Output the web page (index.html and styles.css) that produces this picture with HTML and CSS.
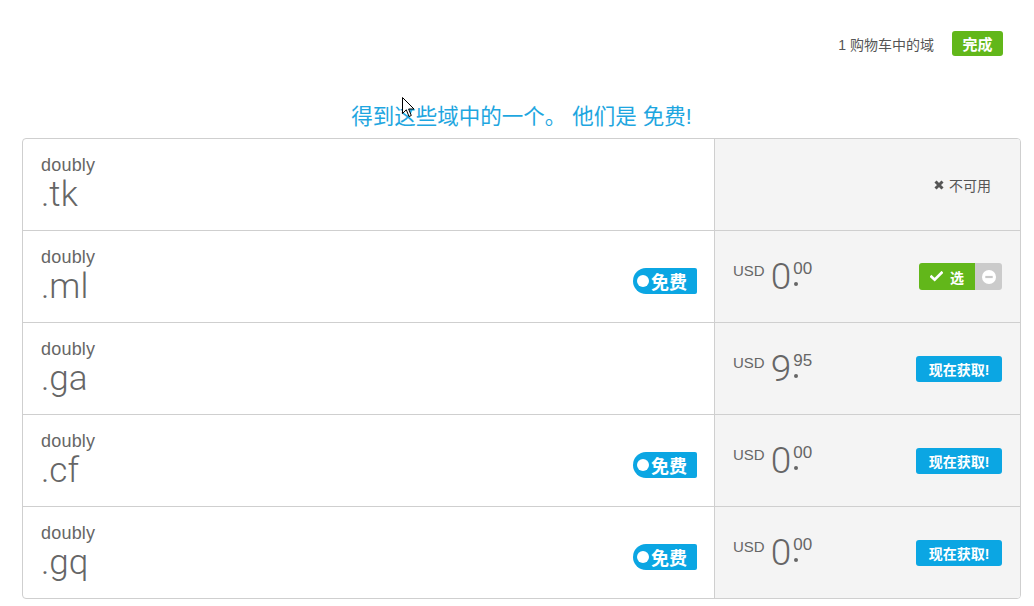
FILE: index.html
```html
<!DOCTYPE html>
<html lang="zh">
<head>
<meta charset="utf-8">
<title>域</title>
<link rel="stylesheet" href="styles.css">
</head>
<body>
<div class="topbar">
  <span class="cart-count">1 购物车中的域</span>
  <button class="btn btn-done">完成</button>
</div>
<div class="wrap">
  <h2 class="heading">得到这些域中的一个。 他们是 免费!</h2>
  <div class="table">
    <div class="row">
      <div class="cell-left">
        <div class="domain"><div class="name">doubly</div><div class="tld">.tk</div></div>
      </div>
      <div class="cell-right">
        <span></span>
        <span class="unavail"><svg class="x" viewBox="0 0 10 10" width="10" height="10"><path d="M1.5 1.5 L8.5 8.5 M8.5 1.5 L1.5 8.5" stroke="#555" stroke-width="3" stroke-linecap="butt"/></svg>不可用</span>
      </div>
    </div>
    <div class="row">
      <div class="cell-left">
        <div class="domain"><div class="name">doubly</div><div class="tld">.ml</div></div>
        <span class="free"><span class="dot-w"></span>免费</span>
      </div>
      <div class="cell-right">
        <div class="price"><span class="cur">USD</span><span class="int">0</span><span class="cents">00</span></div>
        <div class="select-group">
          <button class="btn btn-select"><svg class="check" viewBox="0 0 14 12" width="13" height="11"><path d="M1.5 6.2 L5 9.5 L12.5 2" fill="none" stroke="#fff" stroke-width="3" stroke-linecap="square"/></svg>选</button>
          <button class="btn btn-remove"><svg viewBox="0 0 14 14" width="14" height="14"><circle cx="7" cy="7" r="7" fill="#fff"/><rect x="3.3" y="5.9" width="7.4" height="2.2" fill="#c8c8c8"/></svg></button>
        </div>
      </div>
    </div>
    <div class="row">
      <div class="cell-left">
        <div class="domain"><div class="name">doubly</div><div class="tld">.ga</div></div>
      </div>
      <div class="cell-right">
        <div class="price"><span class="cur">USD</span><span class="int">9</span><span class="cents">95</span></div>
        <button class="btn btn-get">现在获取!</button>
      </div>
    </div>
    <div class="row">
      <div class="cell-left">
        <div class="domain"><div class="name">doubly</div><div class="tld">.cf</div></div>
        <span class="free"><span class="dot-w"></span>免费</span>
      </div>
      <div class="cell-right">
        <div class="price"><span class="cur">USD</span><span class="int">0</span><span class="cents">00</span></div>
        <button class="btn btn-get">现在获取!</button>
      </div>
    </div>
    <div class="row">
      <div class="cell-left">
        <div class="domain"><div class="name">doubly</div><div class="tld">.gq</div></div>
        <span class="free"><span class="dot-w"></span>免费</span>
      </div>
      <div class="cell-right">
        <div class="price"><span class="cur">USD</span><span class="int">0</span><span class="cents">00</span></div>
        <button class="btn btn-get">现在获取!</button>
      </div>
    </div>
  </div>
</div>
<svg class="cursor" width="13" height="21" viewBox="0 0 13 21"><path d="M0.5 0.5 L0.5 16.5 L4.3 12.8 L7 19.5 L9.3 18.5 L6.6 12 L12 12 Z" fill="#fff" stroke="#000" stroke-width="1" stroke-linejoin="miter"/></svg>
</body>
</html>
```
FILE: styles.css
```css
* { box-sizing: border-box; }
body {
  margin: 0;
  font-family: "Liberation Sans", "Noto Sans CJK SC", sans-serif;
  color: #666;
  background: #fff;
  position: relative;
  width: 1034px;
  height: 606px;
  overflow: hidden;
}
.topbar {
  display: flex;
  justify-content: flex-end;
  align-items: center;
  gap: 18px;
  padding: 31px 31px 0 0;
}
.cart-count {
  font-size: 14px;
  color: #555;
}
.btn {
  border: 0;
  margin: 0;
  font-family: "Liberation Sans", "Noto Sans CJK SC", sans-serif;
  font-weight: bold;
  color: #fff;
  cursor: pointer;
  display: inline-flex;
  align-items: center;
  justify-content: center;
  padding: 0;
}
.btn-done {
  background: #62b71a;
  width: 51px;
  height: 25px;
  border-radius: 3px;
  font-size: 15px;
}
.wrap {
  margin: 0 13px 0 22px;
}
.heading {
  margin: 46px 0 6px;
  font-size: 21.5px;
  line-height: 30px;
  font-weight: normal;
  text-align: center;
  color: #1ea6e0;
}
.table {
  border: 1px solid #cfcfcf;
  border-radius: 4px;
  overflow: hidden;
}
.row {
  display: grid;
  grid-template-columns: 692px 1fr;
  height: 92px;
  border-top: 1px solid #cfcfcf;
}
.row:first-child {
  border-top: 0;
  height: 91px;
}
.cell-left {
  border-right: 1px solid #cfcfcf;
  display: flex;
  align-items: center;
  justify-content: space-between;
  padding: 0 17px 0 18px;
}
.cell-right {
  background: #f4f4f4;
  display: flex;
  align-items: center;
  justify-content: space-between;
  padding: 0 18px 0 18px;
}
.domain {
  margin-top: 0;
}
.name {
  font-size: 18px;
  line-height: 20px;
  letter-spacing: 0.2px;
  color: #666;
}
.tld {
  font-family: Roboto, "Liberation Sans", sans-serif;
  font-size: 35px;
  line-height: 40px;
  color: #666;
  font-weight: 300;
}
.free {
  display: inline-flex;
  align-items: center;
  background: #0ba6e3;
  color: #fff;
  font-weight: bold;
  font-size: 18px;
  height: 26px;
  width: 64px;
  padding: 0 0 0 4px;
  border-radius: 13px 2px 2px 13px;
  margin-top: 8px;
}
.dot-w {
  width: 12px;
  height: 12px;
  border-radius: 50%;
  background: #fff;
  margin-right: 2px;
}
.unavail {
  font-size: 14px;
  color: #555;
  margin-right: 11px;
  display: inline-flex;
  align-items: center;
}
.x {
  margin-right: 5px;
}
.price {
  display: flex;
  align-items: flex-start;
  color: #666;
  line-height: 1;
}
.cur {
  font-size: 15px;
  margin-top: 4px;
  margin-right: 6px;
}
.int {
  font-family: Roboto, "Liberation Sans", sans-serif;
  font-size: 37px;
  font-weight: 300;
  margin-top: -1px;
}
.cents {
  font-size: 17px;
  margin-top: 1px;
  margin-left: 2px;
  position: relative;
}
.cents::before {
  content: "";
  position: absolute;
  left: 1px;
  top: 22px;
  width: 4px;
  height: 4px;
  border-radius: 50%;
  background: #666;
}
.select-group {
  display: flex;
  height: 27px;
}
.btn-select {
  background: #62b71a;
  width: 56px;
  height: 27px;
  border-radius: 3px 0 0 3px;
  font-size: 14px;
  gap: 7px;
}
.btn-remove {
  background: #cbcbcb;
  width: 27px;
  height: 27px;
  border-radius: 0 3px 3px 0;
}
.btn-get {
  background: #0ba6e3;
  width: 86px;
  height: 26px;
  border-radius: 3px;
  font-size: 14px;
}
.cursor {
  position: absolute;
  left: 402px;
  top: 97px;
}
```
